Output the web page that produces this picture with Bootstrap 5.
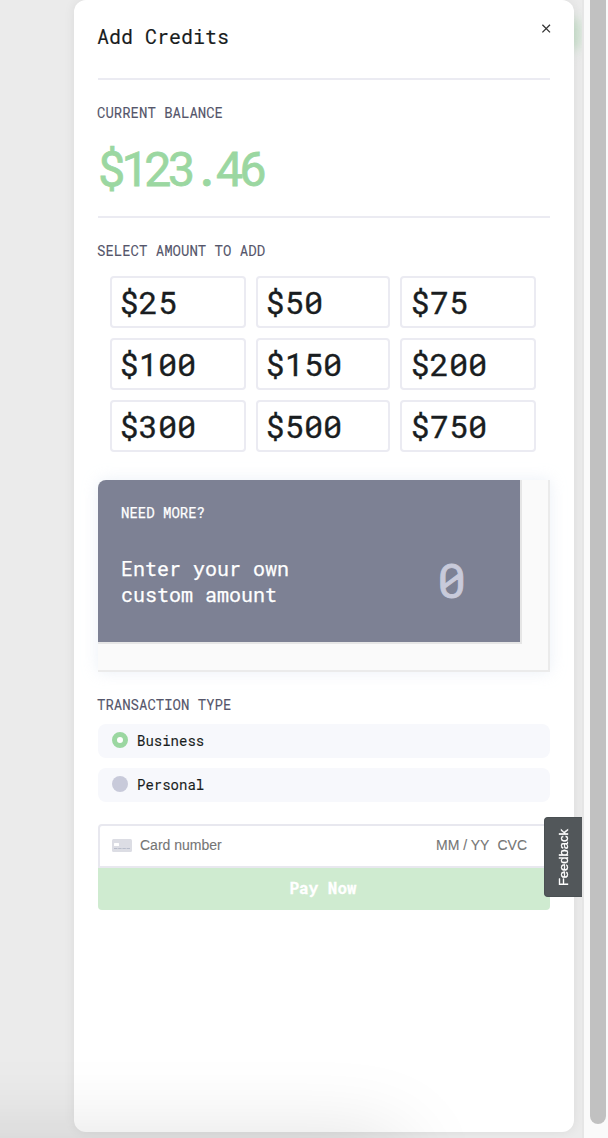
<!DOCTYPE html>
<html lang="en">
<head>
<meta charset="utf-8">
<meta name="viewport" content="width=device-width, initial-scale=1">
<title>Add Credits</title>
<link href="https://cdn.jsdelivr.net/npm/bootstrap@5.3.0/dist/css/bootstrap.min.css" rel="stylesheet">
<style>
body{margin:0;background:#ebebeb;overflow:hidden;font-family:"Roboto Mono","DejaVu Sans Mono",monospace;color:#191d21}
.screen{width:608px;height:1138px}
.backdrop-area{width:584px;padding:0 10px 6px 74px;border-right:2px solid #e6e6e6}
.green-glow{right:0;top:0;width:8px;height:72px;overflow:hidden}
.green-glow::before{content:"";position:absolute;left:-10px;top:20px;width:15px;height:28px;background:#c9e0cc;box-shadow:0 0 9px 2px #d2e3d4;filter:blur(5px);border-radius:6px}
.sheet{width:500px;height:1132px;padding:0 24px;background:#fff;border-radius:12px;box-shadow:0 0 12px rgba(0,0,0,.07)}
.sheet-head{height:80px;border-bottom:2px solid #ebebf2}
.sheet-title{font-size:20px;line-height:26px;margin:23px 0 0 -1px;font-weight:400;-webkit-text-stroke:.15px}
.close-x{margin:24px -1px 0 0;width:10px;height:10px;line-height:0;background:none;border:0;padding:0}
.caption-text{font-size:14px;line-height:18px;color:#55566b;margin-left:-1px;-webkit-text-stroke:.12px}
.balance{height:138px;border-bottom:2px solid #ebebf2;padding-top:24px}
.balance-sum{font-size:48px;line-height:60px;letter-spacing:-5.1px;color:#9bd7a1;margin:16px 0 0 -1px;-webkit-text-stroke:.8px #9bd7a1}
.amounts{display:grid;grid-template-columns:136px 134px 136px;grid-auto-rows:52px;gap:10px;margin:16px 0 0 12px}
.amount{border:2px solid #ebebf2;border-radius:4px;background:#fff;padding:0 0 0 7.5px;text-align:left;font-size:32px;line-height:46px;color:#191d21;-webkit-text-stroke:.35px}
.amount:nth-child(3n){padding-left:8.5px}
.custom{height:192px;margin-top:28px;background:#fafafa;border:solid #ebebeb;border-width:0 2px 2px 0;border-radius:8px 0 0 0;box-shadow:0 0 16px rgba(205,217,235,.4)}
.custom-box{width:424px;height:164px;background:#7d8194;border:solid #e6e6e6;border-width:0 2px 2px 0;border-radius:8px 0 0 0;color:#fff;padding:24px 54px 0 23px}
.need{font-size:14px;line-height:18px;-webkit-text-stroke:.25px}
.own-row{margin-top:33px}
.own{font-size:20px;line-height:26px;-webkit-text-stroke:.25px}
.zero{font-size:48px;line-height:50px;color:#c8cada;-webkit-text-stroke:.9px #c8cada}
.choice{height:34px;border-radius:8px;background:#f7f8fc;padding-left:14px;font-size:14px;line-height:34px;margin-bottom:10px;-webkit-text-stroke:.12px}
.dot{width:16px;height:16px;border-radius:50%;background:#c8cada;margin:-2px 9px 0 0}
.dot.on{background:#fff;border:5px solid #9bd7a1}
.cardline{height:44px;margin-top:22px;border:2px solid #e8e8ef;border-radius:4px 4px 0 0;font:14px/38px "Liberation Sans",Arial,sans-serif;color:#757575;padding:0 21px 0 12px}
.cardline span{padding-bottom:2px;-webkit-text-stroke:.1px}
.cardline svg{margin-bottom:1px}
.pay{height:42px;background:#cfebd0;border:0;border-radius:0 0 4px 4px;color:#fff;font-size:16px;font-weight:700;line-height:40px;padding:0 2px 2px 0;-webkit-text-stroke:.3px}
.feedback{right:0;top:817px;width:38px;height:80px;background:#52575a;border:1px solid #4a5053;border-right:0;border-radius:4px 0 0 4px;color:#fff;font:13px/36px "Liberation Sans",Arial,sans-serif;padding-top:2px;-webkit-text-stroke:.3px #fff}
.feedback span{writing-mode:vertical-rl;transform:rotate(180deg)}
.track{width:24px;background:#fafafa;padding-left:6px}
.thumb{width:16px;height:1124px;background:#c1c1c1;border-radius:0 0 8px 8px}
.haze{left:-200px;top:1138px;width:600px;height:200px;box-shadow:0 0 84px rgba(0,0,0,.13);pointer-events:none}
</style>
</head>
<body>
<div class="screen d-flex position-relative overflow-hidden">
  <div class="backdrop-area position-relative">
    <div class="green-glow position-absolute"></div>
    <main class="sheet position-relative">
      <header class="sheet-head d-flex justify-content-between align-items-start">
        <h1 class="sheet-title">Add Credits</h1>
        <button class="close-x" aria-label="Close"><svg width="10" height="10" viewBox="0 0 10 10"><path d="M1.4.8L9 8.4M9 .8L1.4 8.4" stroke="#333" stroke-width="1.3"/></svg></button>
      </header>
      <section class="balance">
        <div class="caption-text">CURRENT BALANCE</div>
        <div class="balance-sum">$123.46</div>
      </section>
      <section>
        <div class="caption-text pt-4">SELECT AMOUNT TO ADD</div>
        <div class="amounts">
          <button class="amount">$25</button><button class="amount">$50</button><button class="amount">$75</button>
          <button class="amount">$100</button><button class="amount">$150</button><button class="amount">$200</button>
          <button class="amount">$300</button><button class="amount">$500</button><button class="amount">$750</button>
        </div>
      </section>
      <section class="custom">
        <div class="custom-box">
          <div class="need">NEED MORE?</div>
          <div class="own-row d-flex justify-content-between">
            <div class="own">Enter your own<br>custom amount</div>
            <div class="zero">0</div>
          </div>
        </div>
      </section>
      <section>
        <div class="caption-text pt-4 mb-2 pb-1">TRANSACTION TYPE</div>
        <div class="choice d-flex align-items-center" style="margin-top:-2px"><span class="dot on"></span>Business</div>
        <div class="choice d-flex align-items-center"><span class="dot"></span>Personal</div>
      </section>
      <div class="cardline d-flex align-items-center">
        <svg width="20" height="13" viewBox="0 0 20 13" class="me-2"><rect width="20" height="13" rx="1.5" fill="#dcdde4"/><rect x="2" y="4" width="5" height="3" rx=".5" fill="#fff"/><path d="M2 9.5h16" stroke="#b8bdcb" stroke-dasharray="3.4 .8"/></svg>
        <span>Card number</span><span class="ms-auto">MM / YY</span><span class="ms-2">CVC</span>
      </div>
      <button class="pay w-100 d-block">Pay Now</button>
    </main>
    <div class="feedback position-absolute d-flex justify-content-center align-items-center"><span>Feedback</span></div>
  </div>
  <div class="haze position-absolute"></div>
  <div class="track"><div class="thumb"></div></div>
</div>
<script src="https://cdn.jsdelivr.net/npm/bootstrap@5.3.0/dist/js/bootstrap.bundle.min.js"></script>
</body>
</html>
